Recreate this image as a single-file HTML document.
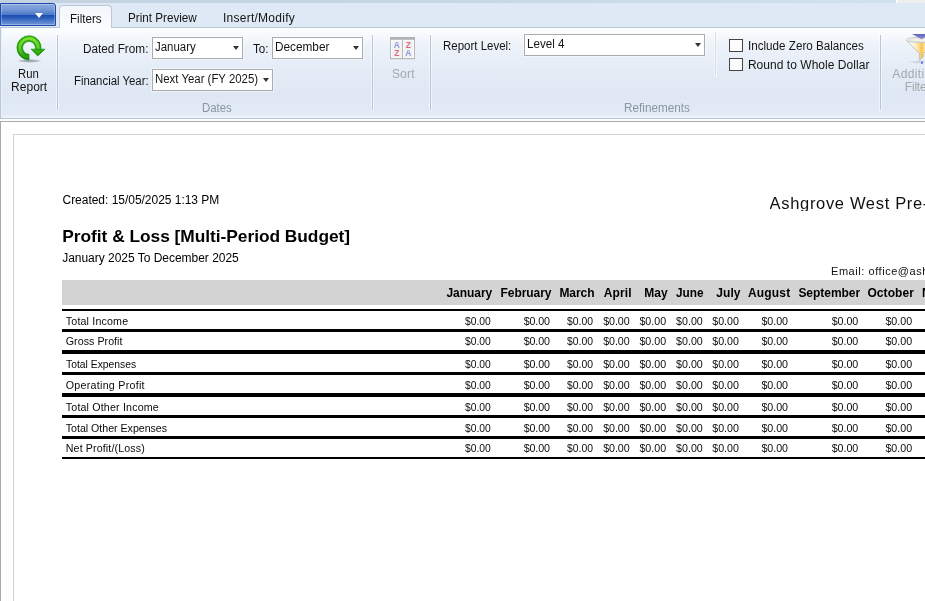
<!DOCTYPE html>
<html>
<head>
<meta charset="utf-8">
<title>Profit &amp; Loss [Multi-Period Budget]</title>
<style>
html,body{margin:0;padding:0;}
body{width:925px;height:601px;overflow:hidden;position:relative;background:#fff;font-family:"Liberation Sans",sans-serif;font-size:12px;color:#000;}
.abs{position:absolute;white-space:nowrap;}
.t{line-height:1;}
#txt{left:0;top:0;width:925px;height:601px;will-change:transform;}
#strip{left:0;top:0;width:925px;height:3px;background:linear-gradient(to right,#c4d1e0 0%,#c9d6e4 50%,#d3e0ee 97%);}
#strip2{left:896px;top:0;width:29px;height:3px;background:#eeeeee;border-left:1px solid #fff;box-shadow:inset 1px 0 0 #f5f5f5;box-sizing:border-box;}
#tabrow{left:0;top:3px;width:925px;height:24px;background:#dfe9f5;}
#appbtn{left:0;top:3px;width:56px;height:23px;box-sizing:border-box;border:1px solid #1b49ad;border-radius:0 3px 0 0;
 background:linear-gradient(to bottom,#8eabde 0%,#6f93d3 30%,#4e79c6 50%,#1c4db3 54%,#2a5bbb 65%,#5580cb 85%,#7196d6 100%);
 box-shadow:inset 0 0 0 1px rgba(255,255,255,0.28);}
#apptri{left:35px;top:13px;width:0;height:0;border-left:4px solid transparent;border-right:4px solid transparent;border-top:5px solid #fff;}
#tab{left:59px;top:5px;width:53px;height:23px;box-sizing:border-box;border:1px solid #b9c9da;border-bottom:none;border-radius:4px 4px 0 0;
 background:linear-gradient(to bottom,#f3f6fb 0%,#fbfcfe 100%);}
#ribbon{left:0;top:27px;width:926px;height:92px;box-sizing:border-box;border:1px solid #b7c8da;border-right:none;
 background:linear-gradient(to bottom,#fdfefe 0%,#eef3fa 18%,#e4ecf6 45%,#dee7f3 75%,#e1eaf5 96%,#ecf2f9 98%,#ecf2f9 100%);
 box-shadow:inset 1px 0 0 #e9f0f8;}
.sep{width:1px;background:#b4c6da;box-shadow:0 0 0 1px rgba(255,255,255,0.55);}
.combo{box-sizing:border-box;border:1px solid #a9abb0;background:#fff;box-shadow:0 0 0 1px rgba(255,255,255,0.45);}
.arr{position:absolute;width:0;height:0;border-left:3px solid transparent;border-right:3px solid transparent;border-top:4px solid #333;}
.chk{width:14px;height:13px;box-sizing:border-box;border:1px solid #444;background:#fdfdfd;}
#gap{left:0;top:119px;width:925px;height:2px;background:#fff;}
#content{left:0;top:121px;width:927px;height:482px;box-sizing:border-box;border:1px solid #a9a9a9;border-right:none;border-bottom:none;background:#fff;}
#page{left:13px;top:134px;width:920px;height:470px;box-sizing:border-box;border:1px solid #d3d3d3;background:#fff;}
#band{left:62px;top:280px;width:870px;height:25px;background:#d3d3d3;}
.rl{left:62px;width:870px;background:#000;}
</style>
</head>
<body>
<div class="abs" id="strip"></div>
<div class="abs" id="strip2"></div>
<div class="abs" id="tabrow"></div>
<div class="abs" id="ribbon"></div>
<div class="abs" id="appbtn"></div>
<div class="abs" id="apptri"></div>
<div class="abs" id="tab"></div>

<!-- Run Report icon -->
<svg class="abs" style="left:14px;top:33px;" width="34" height="34" viewBox="0 0 34 34">
 <defs>
  <linearGradient id="gg" gradientUnits="userSpaceOnUse" x1="0" y1="2.5" x2="0" y2="27"><stop offset="0" stop-color="#35b713"/><stop offset="0.5" stop-color="#2aa810"/><stop offset="1" stop-color="#14810a"/></linearGradient>
  <linearGradient id="gh" gradientUnits="userSpaceOnUse" x1="0" y1="3" x2="0" y2="27"><stop offset="0" stop-color="#8fe838" stop-opacity="0.95"/><stop offset="0.55" stop-color="#6fd82a" stop-opacity="0.75"/><stop offset="1" stop-color="#3fb818" stop-opacity="0.25"/></linearGradient>
  <radialGradient id="sh" cx="0.5" cy="0.5" r="0.5"><stop offset="0" stop-color="#6a7380" stop-opacity="0.7"/><stop offset="0.6" stop-color="#6a7380" stop-opacity="0.45"/><stop offset="1" stop-color="#6a7380" stop-opacity="0"/></radialGradient>
 </defs>
 <ellipse cx="15.5" cy="27.9" rx="12.5" ry="1.9" fill="url(#sh)"/>
 <path d="M27.02 16.2 A12.1 12.1 0 1 0 15 26.9 L15 21.2 A6.4 6.4 0 1 1 21.245 16.2 L17 16.2 L23.8 23 L31 16.2 Z" fill="url(#gg)" stroke="#1a9a0d" stroke-width="0.7" stroke-linejoin="round"/>
 <path d="M24.2 15.6 A9.25 9.25 0 1 0 14.6 24.05" fill="none" stroke="url(#gh)" stroke-width="2.6"/>
 <path d="M20.2 17.4 L27.8 17.4 L23.8 21.3 Z" fill="#52c41e" opacity="0.55"/>
</svg>
<div class="abs sep" style="left:57px;top:35px;height:75px;"></div>

<div class="abs combo" style="left:152px;top:37px;width:91px;height:22px;"><i class="arr" style="left:80px;top:8px;"></i></div>
<div class="abs combo" style="left:272px;top:37px;width:91px;height:22px;"><i class="arr" style="left:80px;top:8px;"></i></div>
<div class="abs combo" style="left:152px;top:69px;width:121px;height:22px;"><i class="arr" style="left:110px;top:8px;"></i></div>
<div class="abs sep" style="left:372px;top:35px;height:75px;"></div>

<!-- Sort icon -->
<svg class="abs" style="left:389px;top:36px;will-change:transform;" width="28" height="25" viewBox="0 0 28 25">
 <rect x="1" y="22.2" width="25.4" height="1.6" fill="#aeb6c2" opacity="0.25"/>
 <rect x="1.5" y="1.5" width="24" height="21" fill="#fbfbfb" stroke="#b7b7b7" stroke-width="1"/>
 <rect x="3.2" y="5" width="8.6" height="16.2" fill="#f1f1f1"/>
 <rect x="15" y="5" width="8.8" height="16.2" fill="#f1f1f1"/>
 <rect x="1" y="1" width="25" height="2.8" fill="#b2b2b2"/>
 <rect x="12.9" y="3.8" width="1.1" height="18.4" fill="#b4b4b4"/>
 <g font-family="Liberation Sans, sans-serif" font-weight="bold" font-size="8.4" text-anchor="middle">
  <text x="7.7" y="11.9" fill="#8e98e2">A</text>
  <text x="7.7" y="20" fill="#da6a80">Z</text>
  <text x="19.4" y="11.9" fill="#da6a80">Z</text>
  <text x="19.4" y="20" fill="#8e98e2">A</text>
 </g>
</svg>
<div class="abs sep" style="left:430px;top:35px;height:75px;"></div>

<div class="abs combo" style="left:524px;top:34px;width:181px;height:22px;"><i class="arr" style="left:170px;top:8px;"></i></div>
<div class="abs sep" style="left:715px;top:32px;height:44px;background:#d9dbde;"></div>
<div class="abs chk" style="left:729px;top:39px;"></div>
<div class="abs chk" style="left:729px;top:58px;"></div>
<div class="abs sep" style="left:880px;top:35px;height:75px;"></div>

<!-- Funnel icon -->
<svg class="abs" style="left:900px;top:30px;" width="30" height="36" viewBox="0 0 30 36">
 <defs>
  <linearGradient id="fy" gradientUnits="userSpaceOnUse" x1="7" y1="0" x2="36" y2="0"><stop offset="0" stop-color="#fffefa"/><stop offset="0.22" stop-color="#fef6e0"/><stop offset="0.38" stop-color="#fce3a4"/><stop offset="0.5" stop-color="#f8c556"/><stop offset="0.62" stop-color="#fce3a4"/><stop offset="1" stop-color="#fffdf4"/></linearGradient>
  <linearGradient id="fb" x1="0" y1="0" x2="0" y2="1"><stop offset="0" stop-color="#6166b8"/><stop offset="1" stop-color="#8d92d4"/></linearGradient>
  <radialGradient id="fs" cx="0.5" cy="0.5" r="0.5"><stop offset="0" stop-color="#8e96a4" stop-opacity="0.4"/><stop offset="1" stop-color="#8e96a4" stop-opacity="0"/></radialGradient>
 </defs>
 <ellipse cx="19" cy="32" rx="12" ry="1.7" fill="url(#fs)"/>
 <path d="M6.8 10.6 L19.4 23.4 L19.4 30.5 L23.6 26.5 L23.6 23.4 L36.2 10.6 Z" fill="url(#fy)" stroke="#bdbfc2" stroke-width="0.9" stroke-linejoin="round"/>
 <ellipse cx="21.5" cy="9.8" rx="15.3" ry="2.6" fill="#fbfbfa" stroke="#bcbdbf" stroke-width="0.9"/>
 <ellipse cx="21.5" cy="10.1" rx="12.6" ry="1.5" fill="#f4f1e6" stroke="#d4d4d4" stroke-width="0.5"/>
 <path d="M12 4 L31 4 L21.5 9.3 Z" fill="url(#fb)"/>
 <rect x="21" y="31.2" width="1.9" height="2.8" fill="#7c81d2"/>
</svg>

<div class="abs" id="gap"></div>
<div class="abs" id="content"></div>
<div class="abs" id="page"></div>
<div class="abs" id="band"></div>
<div class="abs rl" style="top:309px;height:2px;"></div>
<div class="abs rl" style="top:329px;height:3px;"></div>
<div class="abs rl" style="top:350px;height:4px;"></div>
<div class="abs rl" style="top:372px;height:3px;"></div>
<div class="abs rl" style="top:393px;height:4px;"></div>
<div class="abs rl" style="top:415px;height:3px;"></div>
<div class="abs rl" style="top:436px;height:3px;"></div>
<div class="abs rl" style="top:457px;height:2px;"></div>

<div class="abs" id="txt">
<div class="abs t" style="left:70.00px;top:12.84px;font-size:12px;color:#151515;transform:scaleX(0.9672);transform-origin:0 0;">Filters</div>
<div class="abs t" style="left:127.80px;top:11.84px;font-size:12px;color:#151515;transform:scaleX(0.9733);transform-origin:0 0;">Print Preview</div>
<div class="abs t" style="left:222.90px;top:11.84px;font-size:12px;color:#151515;letter-spacing:0.266px;">Insert/Modify</div>
<div class="abs t" style="left:18.00px;top:68.14px;font-size:12px;color:#151515;transform:scaleX(0.9448);transform-origin:0 0;">Run</div>
<div class="abs t" style="left:11.10px;top:81.14px;font-size:12px;color:#151515;letter-spacing:0.014px;">Report</div>
<div class="abs t" style="left:83.00px;top:42.84px;font-size:12px;color:#151515;transform:scaleX(0.9807);transform-origin:0 0;">Dated From:</div>
<div class="abs t" style="left:154.60px;top:40.84px;font-size:12px;color:#151515;transform:scaleX(0.9531);transform-origin:0 0;">January</div>
<div class="abs t" style="left:252.90px;top:42.84px;font-size:12px;color:#151515;transform:scaleX(0.9678);transform-origin:0 0;">To:</div>
<div class="abs t" style="left:275.00px;top:40.84px;font-size:12px;color:#151515;transform:scaleX(0.9827);transform-origin:0 0;">December</div>
<div class="abs t" style="left:73.90px;top:74.84px;font-size:12px;color:#151515;transform:scaleX(0.9475);transform-origin:0 0;">Financial Year:</div>
<div class="abs t" style="left:154.90px;top:72.84px;font-size:12px;color:#151515;transform:scaleX(0.9501);transform-origin:0 0;">Next Year (FY 2025)</div>
<div class="abs t" style="left:202.00px;top:102.14px;font-size:12px;color:#8b95a3;transform:scaleX(0.9503);transform-origin:0 0;">Dates</div>
<div class="abs t" style="left:391.90px;top:67.84px;font-size:12px;color:#a4a8ad;letter-spacing:0.195px;">Sort</div>
<div class="abs t" style="left:443.00px;top:40.14px;font-size:12px;color:#151515;transform:scaleX(0.9569);transform-origin:0 0;">Report Level:</div>
<div class="abs t" style="left:527.00px;top:37.84px;font-size:12px;color:#151515;transform:scaleX(0.9689);transform-origin:0 0;">Level 4</div>
<div class="abs t" style="left:747.90px;top:39.84px;font-size:12px;color:#151515;transform:scaleX(0.9706);transform-origin:0 0;">Include Zero Balances</div>
<div class="abs t" style="left:747.90px;top:59.14px;font-size:12px;color:#151515;letter-spacing:0.038px;">Round to Whole Dollar</div>
<div class="abs t" style="left:624.40px;top:102.14px;font-size:12px;color:#8b95a3;transform:scaleX(0.9796);transform-origin:0 0;">Refinements</div>
<div class="abs t" style="left:892.30px;top:68.14px;font-size:12px;color:#a4a8ad;letter-spacing:0.35px;">Additional</div>
<div class="abs t" style="left:904.80px;top:81.14px;font-size:12px;color:#a4a8ad;letter-spacing:-0.2px;">Filters</div>
<div class="abs t" style="left:62.50px;top:193.84px;font-size:12px;color:#000;letter-spacing:-0.025px;">Created: 15/05/2025 1:13 PM</div>
<div class="abs t" style="left:62.30px;top:228.33px;font-size:17.33px;color:#000;font-weight:bold;letter-spacing:-0.029px;transform:scaleY(0.94);transform-origin:0 84.65%;">Profit &amp; Loss [Multi-Period Budget]</div>
<div class="abs t" style="left:62.20px;top:251.84px;font-size:12px;color:#000;letter-spacing:-0.023px;">January 2025 To December 2025</div>
<div class="abs t" style="left:769.60px;top:195.33px;font-size:16.5px;color:#111;letter-spacing:0.67px;height:15.67px;overflow:hidden;">Ashgrove West Pre-</div>
<div class="abs t" style="left:831.00px;top:265.69px;font-size:11px;color:#111;letter-spacing:0.55px;">Email: office@ashgrove</div>
<div class="abs t" style="left:65.80px;top:315.97px;font-size:10.67px;color:#0a0a0a;letter-spacing:0.171px;">Total Income</div>
<div class="abs t" style="left:65.80px;top:335.97px;font-size:10.67px;color:#0a0a0a;letter-spacing:0.039px;">Gross Profit</div>
<div class="abs t" style="left:65.80px;top:358.97px;font-size:10.67px;color:#0a0a0a;transform:scaleX(0.9712);transform-origin:0 0;">Total Expenses</div>
<div class="abs t" style="left:65.80px;top:379.97px;font-size:10.67px;color:#0a0a0a;letter-spacing:0.271px;">Operating Profit</div>
<div class="abs t" style="left:65.80px;top:401.97px;font-size:10.67px;color:#0a0a0a;letter-spacing:0.169px;">Total Other Income</div>
<div class="abs t" style="left:65.80px;top:422.97px;font-size:10.67px;color:#0a0a0a;letter-spacing:-0.031px;">Total Other Expenses</div>
<div class="abs t" style="left:65.80px;top:442.97px;font-size:10.67px;color:#0a0a0a;letter-spacing:0.120px;">Net Profit/(Loss)</div>
<div class="abs t" style="left:446.50px;top:286.64px;font-size:12px;color:#000;font-weight:bold;letter-spacing:-0.055px;">January</div>
<div class="abs t" style="left:500.60px;top:286.64px;font-size:12px;color:#000;font-weight:bold;letter-spacing:-0.066px;">February</div>
<div class="abs t" style="left:559.40px;top:286.64px;font-size:12px;color:#000;font-weight:bold;letter-spacing:-0.036px;">March</div>
<div class="abs t" style="left:603.70px;top:286.64px;font-size:12px;color:#000;font-weight:bold;letter-spacing:0.139px;">April</div>
<div class="abs t" style="left:644.30px;top:286.64px;font-size:12px;color:#000;font-weight:bold;letter-spacing:-0.022px;">May</div>
<div class="abs t" style="left:676.40px;top:286.64px;font-size:12px;color:#000;font-weight:bold;transform:scaleX(0.9852);transform-origin:0 0;">June</div>
<div class="abs t" style="left:716.30px;top:286.64px;font-size:12px;color:#000;font-weight:bold;letter-spacing:0.061px;">July</div>
<div class="abs t" style="left:747.90px;top:286.64px;font-size:12px;color:#000;font-weight:bold;letter-spacing:0.194px;">August</div>
<div class="abs t" style="left:798.40px;top:286.64px;font-size:12px;color:#000;font-weight:bold;letter-spacing:-0.029px;">September</div>
<div class="abs t" style="left:867.40px;top:286.64px;font-size:12px;color:#000;font-weight:bold;letter-spacing:0.097px;">October</div>
<div class="abs t" style="left:922.00px;top:286.64px;font-size:12px;color:#000;font-weight:bold;">November</div>
<div class="abs t" style="left:464.70px;top:315.97px;font-size:10.67px;color:#0a0a0a;transform:scaleX(0.9673);transform-origin:0 0;">$0.00</div>
<div class="abs t" style="left:523.70px;top:315.97px;font-size:10.67px;color:#0a0a0a;letter-spacing:-0.118px;">$0.00</div>
<div class="abs t" style="left:567.20px;top:315.97px;font-size:10.67px;color:#0a0a0a;transform:scaleX(0.9748);transform-origin:0 0;">$0.00</div>
<div class="abs t" style="left:603.20px;top:315.97px;font-size:10.67px;color:#0a0a0a;letter-spacing:-0.068px;">$0.00</div>
<div class="abs t" style="left:639.40px;top:315.97px;font-size:10.67px;color:#0a0a0a;letter-spacing:0.007px;">$0.00</div>
<div class="abs t" style="left:676.00px;top:315.97px;font-size:10.67px;color:#0a0a0a;letter-spacing:0.032px;">$0.00</div>
<div class="abs t" style="left:712.20px;top:315.97px;font-size:10.67px;color:#0a0a0a;letter-spacing:0.032px;">$0.00</div>
<div class="abs t" style="left:761.40px;top:315.97px;font-size:10.67px;color:#0a0a0a;letter-spacing:-0.018px;">$0.00</div>
<div class="abs t" style="left:831.70px;top:315.97px;font-size:10.67px;color:#0a0a0a;letter-spacing:-0.018px;">$0.00</div>
<div class="abs t" style="left:885.40px;top:315.97px;font-size:10.67px;color:#0a0a0a;letter-spacing:0.007px;">$0.00</div>
<div class="abs t" style="left:464.70px;top:335.97px;font-size:10.67px;color:#0a0a0a;transform:scaleX(0.9673);transform-origin:0 0;">$0.00</div>
<div class="abs t" style="left:523.70px;top:335.97px;font-size:10.67px;color:#0a0a0a;letter-spacing:-0.118px;">$0.00</div>
<div class="abs t" style="left:567.20px;top:335.97px;font-size:10.67px;color:#0a0a0a;transform:scaleX(0.9748);transform-origin:0 0;">$0.00</div>
<div class="abs t" style="left:603.20px;top:335.97px;font-size:10.67px;color:#0a0a0a;letter-spacing:-0.068px;">$0.00</div>
<div class="abs t" style="left:639.40px;top:335.97px;font-size:10.67px;color:#0a0a0a;letter-spacing:0.007px;">$0.00</div>
<div class="abs t" style="left:676.00px;top:335.97px;font-size:10.67px;color:#0a0a0a;letter-spacing:0.032px;">$0.00</div>
<div class="abs t" style="left:712.20px;top:335.97px;font-size:10.67px;color:#0a0a0a;letter-spacing:0.032px;">$0.00</div>
<div class="abs t" style="left:761.40px;top:335.97px;font-size:10.67px;color:#0a0a0a;letter-spacing:-0.018px;">$0.00</div>
<div class="abs t" style="left:831.70px;top:335.97px;font-size:10.67px;color:#0a0a0a;letter-spacing:-0.018px;">$0.00</div>
<div class="abs t" style="left:885.40px;top:335.97px;font-size:10.67px;color:#0a0a0a;letter-spacing:0.007px;">$0.00</div>
<div class="abs t" style="left:464.70px;top:358.97px;font-size:10.67px;color:#0a0a0a;transform:scaleX(0.9673);transform-origin:0 0;">$0.00</div>
<div class="abs t" style="left:523.70px;top:358.97px;font-size:10.67px;color:#0a0a0a;letter-spacing:-0.118px;">$0.00</div>
<div class="abs t" style="left:567.20px;top:358.97px;font-size:10.67px;color:#0a0a0a;transform:scaleX(0.9748);transform-origin:0 0;">$0.00</div>
<div class="abs t" style="left:603.20px;top:358.97px;font-size:10.67px;color:#0a0a0a;letter-spacing:-0.068px;">$0.00</div>
<div class="abs t" style="left:639.40px;top:358.97px;font-size:10.67px;color:#0a0a0a;letter-spacing:0.007px;">$0.00</div>
<div class="abs t" style="left:676.00px;top:358.97px;font-size:10.67px;color:#0a0a0a;letter-spacing:0.032px;">$0.00</div>
<div class="abs t" style="left:712.20px;top:358.97px;font-size:10.67px;color:#0a0a0a;letter-spacing:0.032px;">$0.00</div>
<div class="abs t" style="left:761.40px;top:358.97px;font-size:10.67px;color:#0a0a0a;letter-spacing:-0.018px;">$0.00</div>
<div class="abs t" style="left:831.70px;top:358.97px;font-size:10.67px;color:#0a0a0a;letter-spacing:-0.018px;">$0.00</div>
<div class="abs t" style="left:885.40px;top:358.97px;font-size:10.67px;color:#0a0a0a;letter-spacing:0.007px;">$0.00</div>
<div class="abs t" style="left:464.70px;top:379.97px;font-size:10.67px;color:#0a0a0a;transform:scaleX(0.9673);transform-origin:0 0;">$0.00</div>
<div class="abs t" style="left:523.70px;top:379.97px;font-size:10.67px;color:#0a0a0a;letter-spacing:-0.118px;">$0.00</div>
<div class="abs t" style="left:567.20px;top:379.97px;font-size:10.67px;color:#0a0a0a;transform:scaleX(0.9748);transform-origin:0 0;">$0.00</div>
<div class="abs t" style="left:603.20px;top:379.97px;font-size:10.67px;color:#0a0a0a;letter-spacing:-0.068px;">$0.00</div>
<div class="abs t" style="left:639.40px;top:379.97px;font-size:10.67px;color:#0a0a0a;letter-spacing:0.007px;">$0.00</div>
<div class="abs t" style="left:676.00px;top:379.97px;font-size:10.67px;color:#0a0a0a;letter-spacing:0.032px;">$0.00</div>
<div class="abs t" style="left:712.20px;top:379.97px;font-size:10.67px;color:#0a0a0a;letter-spacing:0.032px;">$0.00</div>
<div class="abs t" style="left:761.40px;top:379.97px;font-size:10.67px;color:#0a0a0a;letter-spacing:-0.018px;">$0.00</div>
<div class="abs t" style="left:831.70px;top:379.97px;font-size:10.67px;color:#0a0a0a;letter-spacing:-0.018px;">$0.00</div>
<div class="abs t" style="left:885.40px;top:379.97px;font-size:10.67px;color:#0a0a0a;letter-spacing:0.007px;">$0.00</div>
<div class="abs t" style="left:464.70px;top:401.97px;font-size:10.67px;color:#0a0a0a;transform:scaleX(0.9673);transform-origin:0 0;">$0.00</div>
<div class="abs t" style="left:523.70px;top:401.97px;font-size:10.67px;color:#0a0a0a;letter-spacing:-0.118px;">$0.00</div>
<div class="abs t" style="left:567.20px;top:401.97px;font-size:10.67px;color:#0a0a0a;transform:scaleX(0.9748);transform-origin:0 0;">$0.00</div>
<div class="abs t" style="left:603.20px;top:401.97px;font-size:10.67px;color:#0a0a0a;letter-spacing:-0.068px;">$0.00</div>
<div class="abs t" style="left:639.40px;top:401.97px;font-size:10.67px;color:#0a0a0a;letter-spacing:0.007px;">$0.00</div>
<div class="abs t" style="left:676.00px;top:401.97px;font-size:10.67px;color:#0a0a0a;letter-spacing:0.032px;">$0.00</div>
<div class="abs t" style="left:712.20px;top:401.97px;font-size:10.67px;color:#0a0a0a;letter-spacing:0.032px;">$0.00</div>
<div class="abs t" style="left:761.40px;top:401.97px;font-size:10.67px;color:#0a0a0a;letter-spacing:-0.018px;">$0.00</div>
<div class="abs t" style="left:831.70px;top:401.97px;font-size:10.67px;color:#0a0a0a;letter-spacing:-0.018px;">$0.00</div>
<div class="abs t" style="left:885.40px;top:401.97px;font-size:10.67px;color:#0a0a0a;letter-spacing:0.007px;">$0.00</div>
<div class="abs t" style="left:464.70px;top:422.97px;font-size:10.67px;color:#0a0a0a;transform:scaleX(0.9673);transform-origin:0 0;">$0.00</div>
<div class="abs t" style="left:523.70px;top:422.97px;font-size:10.67px;color:#0a0a0a;letter-spacing:-0.118px;">$0.00</div>
<div class="abs t" style="left:567.20px;top:422.97px;font-size:10.67px;color:#0a0a0a;transform:scaleX(0.9748);transform-origin:0 0;">$0.00</div>
<div class="abs t" style="left:603.20px;top:422.97px;font-size:10.67px;color:#0a0a0a;letter-spacing:-0.068px;">$0.00</div>
<div class="abs t" style="left:639.40px;top:422.97px;font-size:10.67px;color:#0a0a0a;letter-spacing:0.007px;">$0.00</div>
<div class="abs t" style="left:676.00px;top:422.97px;font-size:10.67px;color:#0a0a0a;letter-spacing:0.032px;">$0.00</div>
<div class="abs t" style="left:712.20px;top:422.97px;font-size:10.67px;color:#0a0a0a;letter-spacing:0.032px;">$0.00</div>
<div class="abs t" style="left:761.40px;top:422.97px;font-size:10.67px;color:#0a0a0a;letter-spacing:-0.018px;">$0.00</div>
<div class="abs t" style="left:831.70px;top:422.97px;font-size:10.67px;color:#0a0a0a;letter-spacing:-0.018px;">$0.00</div>
<div class="abs t" style="left:885.40px;top:422.97px;font-size:10.67px;color:#0a0a0a;letter-spacing:0.007px;">$0.00</div>
<div class="abs t" style="left:464.70px;top:442.97px;font-size:10.67px;color:#0a0a0a;transform:scaleX(0.9673);transform-origin:0 0;">$0.00</div>
<div class="abs t" style="left:523.70px;top:442.97px;font-size:10.67px;color:#0a0a0a;letter-spacing:-0.118px;">$0.00</div>
<div class="abs t" style="left:567.20px;top:442.97px;font-size:10.67px;color:#0a0a0a;transform:scaleX(0.9748);transform-origin:0 0;">$0.00</div>
<div class="abs t" style="left:603.20px;top:442.97px;font-size:10.67px;color:#0a0a0a;letter-spacing:-0.068px;">$0.00</div>
<div class="abs t" style="left:639.40px;top:442.97px;font-size:10.67px;color:#0a0a0a;letter-spacing:0.007px;">$0.00</div>
<div class="abs t" style="left:676.00px;top:442.97px;font-size:10.67px;color:#0a0a0a;letter-spacing:0.032px;">$0.00</div>
<div class="abs t" style="left:712.20px;top:442.97px;font-size:10.67px;color:#0a0a0a;letter-spacing:0.032px;">$0.00</div>
<div class="abs t" style="left:761.40px;top:442.97px;font-size:10.67px;color:#0a0a0a;letter-spacing:-0.018px;">$0.00</div>
<div class="abs t" style="left:831.70px;top:442.97px;font-size:10.67px;color:#0a0a0a;letter-spacing:-0.018px;">$0.00</div>
<div class="abs t" style="left:885.40px;top:442.97px;font-size:10.67px;color:#0a0a0a;letter-spacing:0.007px;">$0.00</div>
</div>
</body>
</html>
